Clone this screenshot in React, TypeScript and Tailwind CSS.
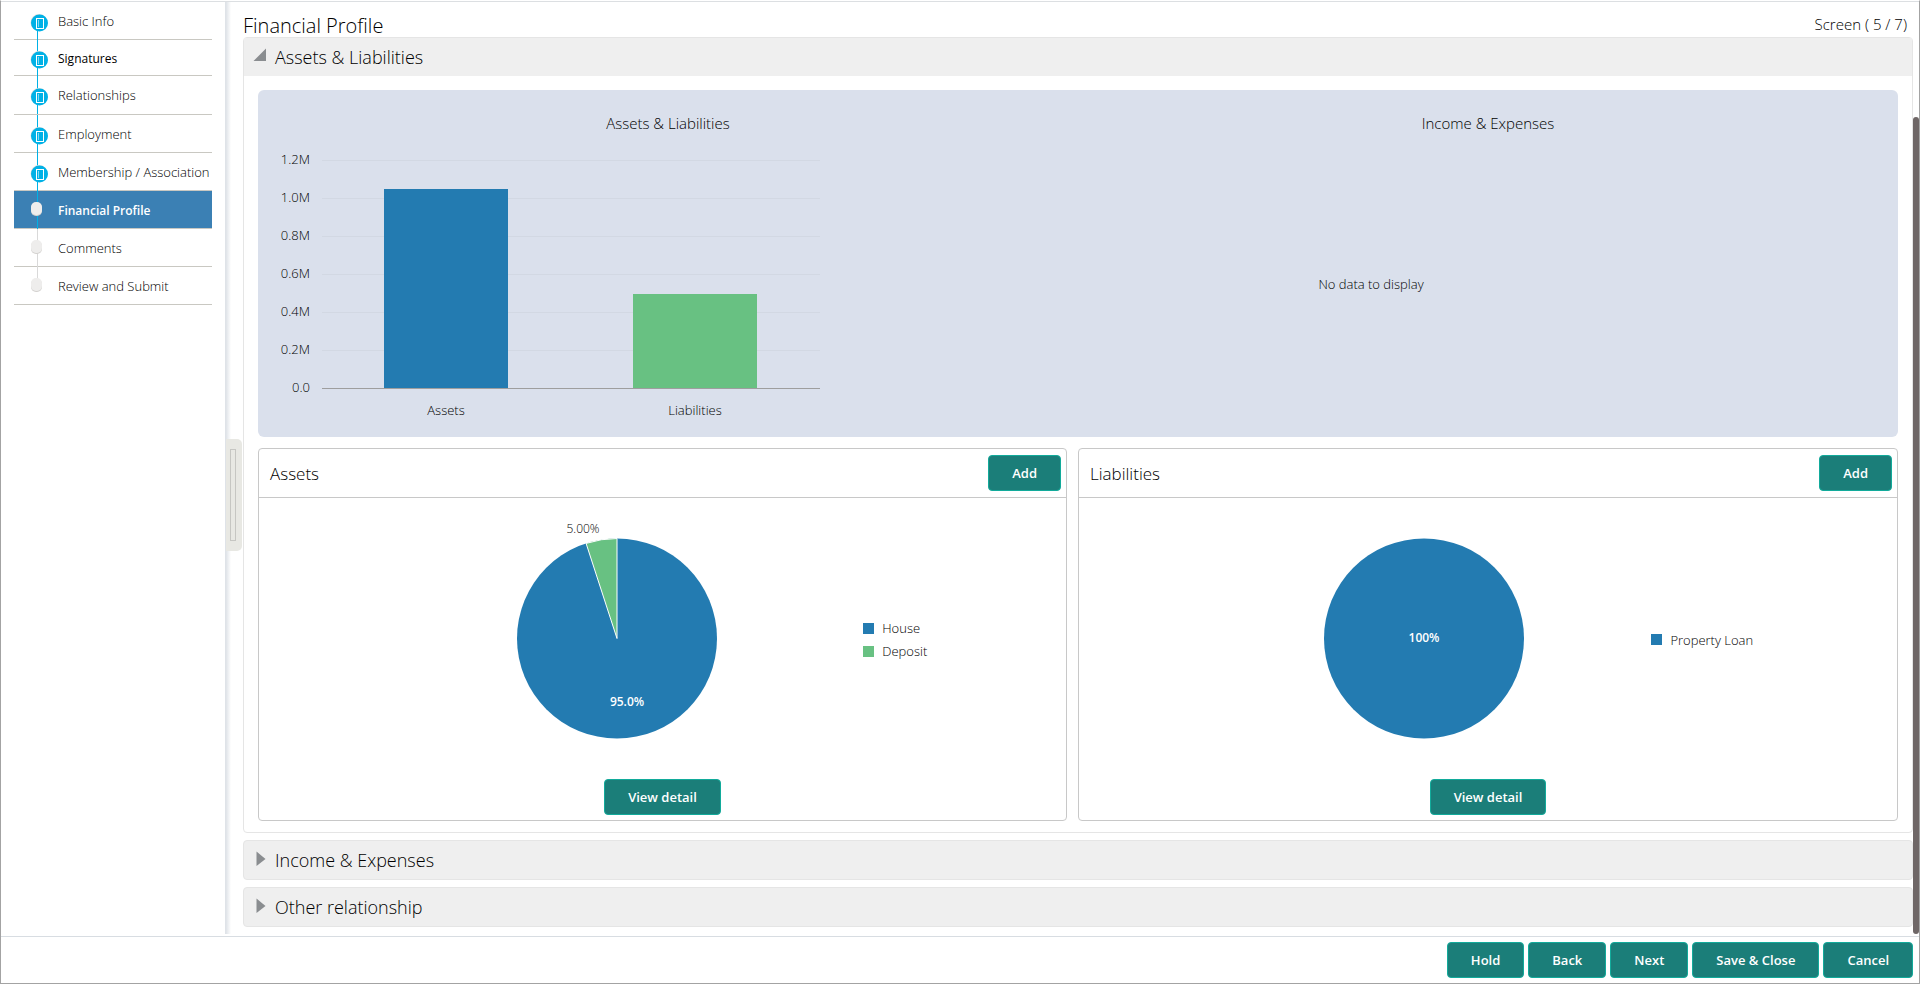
import type { ReactNode } from "react";

type StepState = "done" | "current" | "todo";

type Step = { label: string; state: StepState; row: string; text: string };

const steps: Step[] = [
  { label: "Basic Info", state: "done", row: "h-[37px]", text: "text-[13px]" },
  { label: "Signatures", state: "done", row: "h-[36px]", text: "text-xs font-normal" },
  { label: "Relationships", state: "done", row: "h-[39px]", text: "text-[13px]" },
  { label: "Employment", state: "done", row: "h-[38px]", text: "text-[13px]" },
  { label: "Membership / Association", state: "done", row: "h-[38px]", text: "text-[13px]" },
  { label: "Financial Profile", state: "current", row: "h-[38px]", text: "text-xs font-semibold text-white" },
  { label: "Comments", state: "todo", row: "h-[38px]", text: "text-[13px]" },
  { label: "Review and Submit", state: "todo", row: "h-[38px]", text: "text-[13px]" },
];

function StepMarker({ state, first, last }: { state: StepState; first: boolean; last: boolean }) {
  const line = state === "todo" ? "#d9d9d9" : "#00b1e6";
  return (
    <svg width="20" height="38" viewBox="0 0 20 38" className="shrink-0" aria-hidden="true">
      {!first && <rect x="7" y="0" width="1" height="14" fill={line} />}
      {!last && <rect x="7" y="24" width="1" height="14" fill={line} />}
      {state === "done" ? (
        <>
          <circle cx="9" cy="20.500" r="8.5" fill="#e4e0dc" />
          <circle cx="9.5" cy="21" r="8.5" fill="#00b1e6" />
          <rect x="6.5" y="16.5" width="7" height="10" fill="none" stroke="#ffffff" />
          <rect x="8" y="18" width="1" height="7" fill="#7fd8f2" />
        </>
      ) : (
        <>
          <rect x="1" y="12" width="11" height="13" rx="5" fill="#d4d2d0" />
          <rect x="1" y="11" width="11" height="13" rx="5" fill="#eeedec" />
        </>
      )}
    </svg>
  );
}

function Button({ children }: { children: ReactNode }) {
  return (
    <button
      type="button"
      className="h-9 rounded border border-[#12ab9b] bg-[#1b7e79] px-[23px] pt-[2px] text-[13px] font-semibold text-white"
    >
      {children}
    </button>
  );
}

function BarChart() {
  const ticks = ["1.2M", "1.0M", "0.8M", "0.6M", "0.4M", "0.2M"];
  return (
    <svg width="586" height="290" viewBox="0 0 586 290" fontSize="13" fill="#000000" role="img" aria-label="Assets and liabilities bar chart">
      {ticks.map((tick, i) => (
        <g key={tick}>
          <text x="52" y={20 + i * 38} textAnchor="end">{tick}</text>
          <rect x="64" y={16 + i * 38} width="498" height="1" fill="#d2d8e3" />
        </g>
      ))}
      <text x="52" y="248" textAnchor="end">0.0</text>
      <rect x="126" y="45" width="124" height="199" fill="#237bb1" />
      <rect x="375" y="150" width="124" height="94" fill="#68c182" />
      <rect x="64" y="244" width="498" height="1" fill="#9e9e9e" />
      <text x="188" y="271" textAnchor="middle">Assets</text>
      <text x="437" y="271" textAnchor="middle">Liabilities</text>
    </svg>
  );
}

type Item = { name: string; color: string };

function Legend({ items }: { items: Item[] }) {
  return (
    <ul className="flex flex-col gap-[5px] pt-[2px]">
      {items.map((item) => (
        <li key={item.name} className="flex h-[18px] items-center gap-2 text-[13px]">
          <svg width="11" height="11" aria-hidden="true">
            <rect width="11" height="11" fill={item.color} />
          </svg>
          <span className="pt-[2px]">{item.name}</span>
        </li>
      ))}
    </ul>
  );
}

function Card({ title, layout, pie, items }: { title: string; layout: string; pie: ReactNode; items: Item[] }) {
  return (
    <section className="rounded border border-[#c8c8c8]">
      <header className="flex h-[49px] items-center justify-between border-b border-[#c8c8c8] pr-[5px] pl-[11px]">
        <h3 className="pt-px text-[17px]">{title}</h3>
        <Button>Add</Button>
      </header>
      <div className={layout}>
        {pie}
        <Legend items={items} />
      </div>
      <div className="flex justify-center pb-[5px]">
        <Button>View detail</Button>
      </div>
    </section>
  );
}

function Collapsed({ title }: { title: string }) {
  return (
    <button
      type="button"
      aria-expanded="false"
      className="flex h-10 w-full items-center gap-[9px] rounded-sm border border-[#e5e5e5] bg-[#efefef] px-3 text-left text-lg"
    >
      <svg width="10" height="20" viewBox="0 0 10 20" aria-hidden="true">
        <path d="M0.500 1.500 L9.500 9 L0.500 16 Z" fill="#8a8d90" />
      </svg>
      {title}
    </button>
  );
}

export default function App() {
  return (
    <div className="flex min-h-screen flex-col border border-[#a3a3a3] border-t-white bg-white font-['Open_Sans','Noto_Sans',sans-serif] font-light text-black">
      <div className="flex flex-1 border-t border-[#dcdfe2] pb-[2px]">
        <nav aria-label="Steps" className="w-[225px] shrink-0 border-r border-[#dfe3e8] pt-px pr-[13px] pl-[13px]">
          <ol>
            {steps.map((step, i) => (
              <li key={step.label} className={step.row}>
                <a
                  href="#"
                  className={
                    step.state === "current"
                      ? "flex h-full items-center border-b border-[#c9c8c2] bg-[#3b80b4] pl-4"
                      : "flex h-full items-center border-b border-[#c9c8c2] pl-4"
                  }
                >
                  <StepMarker state={step.state} first={i === 0} last={i === steps.length - 1} />
                  <span className={`pt-[2px] pl-2 whitespace-nowrap ${step.text}`}>{step.label}</span>
                </a>
              </li>
            ))}
          </ol>
        </nav>

        <div className="w-[17px] shrink-0 bg-[linear-gradient(to_right,#dfe3e8,#ffffff_5px)] pt-[437px]">
          <div className="flex h-28 w-[16px] items-center rounded-r-[5px] bg-[#e8e8e3] pl-1">
            <div className="h-[92px] w-[6px] border border-[#c6c6c2]" />
          </div>
        </div>

        <main className="min-w-0 flex-1 pb-[6px]">
          <div className="flex h-[35px] items-end justify-between pr-[6px]">
            <h1 className="text-xl leading-[22px]">Financial Profile</h1>
            <span className="pb-[3px] text-[15px] leading-5">Screen ( 5 / 7)</span>
          </div>

          <div className="flex flex-col gap-[7px]">
            <section className="rounded-sm border border-[#e5e5e5]">
              <button
                type="button"
                aria-expanded="true"
                className="flex h-[38px] w-full items-center gap-[9px] bg-[#efefef] px-[9px] text-left text-lg"
              >
                <svg width="13" height="18" viewBox="0 0 13 18" aria-hidden="true">
                  <path d="M13 0.500 V13 H0.500 Z" fill="#8a8d90" />
                </svg>
                Assets &amp; Liabilities
              </button>

              <div className="flex flex-col gap-[11px] px-[14px] pt-[14px] pb-[11px]">
                <div className="grid grid-cols-2 rounded-md bg-[#dae0ec] pt-[22px]">
                  <section className="flex flex-col">
                    <h2 className="text-center text-[15px] leading-[22px]">Assets &amp; Liabilities</h2>
                    <div className="h-[303px] pt-[10px]">
                      <BarChart />
                    </div>
                  </section>
                  <section className="flex flex-col">
                    <h2 className="text-center text-[15px] leading-[22px]">Income &amp; Expenses</h2>
                    <div className="flex h-[303px] w-[586px] items-center justify-center pb-[2px] text-[13px]">
                      No data to display
                    </div>
                  </section>
                </div>

                <div className="grid grid-cols-[809fr_820fr] gap-[11px]">
                  <Card
                    title="Assets"
                    layout="flex h-[281px] items-center gap-[146px] pl-[32%]"
                    items={[
                      { name: "House", color: "#237bb1" },
                      { name: "Deposit", color: "#68c182" },
                    ]}
                    pie={
                      <svg width="200" height="248" viewBox="0 0 200 248" fontSize="12" role="img" aria-label="Assets split">
                        <circle cx="100" cy="123.500" r="100" fill="#237bb1" />
                        <path
                          d="M100 123.500 L69.100 28.400 A100 100 0 0 1 100 23.500 Z"
                          fill="#68c182"
                          stroke="#ffffff"
                          strokeLinejoin="bevel"
                        />
                        <text x="66" y="18" textAnchor="middle" fill="#000000">5.00%</text>
                        <text x="110" y="191" textAnchor="middle" fill="#ffffff" fontWeight="600">95.0%</text>
                      </svg>
                    }
                  />
                  <Card
                    title="Liabilities"
                    layout="flex h-[281px] items-center gap-[127px] pl-[30%]"
                    items={[{ name: "Property Loan", color: "#237bb1" }]}
                    pie={
                      <svg width="200" height="248" viewBox="0 0 200 248" fontSize="12" role="img" aria-label="Liabilities split">
                        <circle cx="100" cy="123.500" r="100" fill="#237bb1" />
                        <text x="100" y="127" textAnchor="middle" fill="#ffffff" fontWeight="600">100%</text>
                      </svg>
                    }
                  />
                </div>
              </div>
            </section>

            <Collapsed title="Income &amp; Expenses" />
            <Collapsed title="Other relationship" />
          </div>
        </main>

        <div className="flex w-[6px] shrink-0 flex-col pt-[115px]">
          <div className="flex-1 rounded-full bg-[#6f6767]" />
        </div>
      </div>

      <footer className="flex justify-end gap-1 border-t border-[#d8dde2] px-[6px] pt-[5px] pb-[5px]">
        <Button>Hold</Button>
        <Button>Back</Button>
        <Button>Next</Button>
        <Button>Save &amp; Close</Button>
        <Button>Cancel</Button>
      </footer>
    </div>
  );
}
